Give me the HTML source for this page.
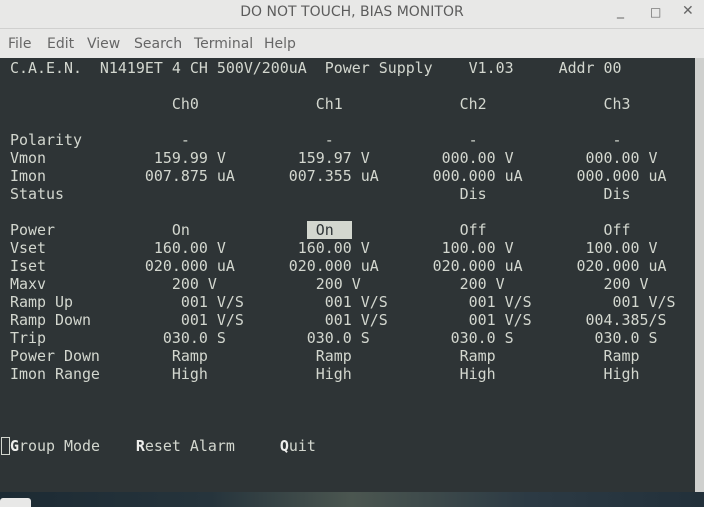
<!DOCTYPE html>
<html><head><meta charset="utf-8"><style>
*{margin:0;padding:0;box-sizing:border-box}
body{width:704px;height:507px;overflow:hidden;background:#2e3436;position:relative;font-family:"Liberation Sans","DejaVu Sans",sans-serif}
#title{position:absolute;left:0;top:0;width:704px;height:29px;background:#e8e8e7;border-bottom:1px solid #d0d0cf}
#title .t{position:absolute;left:0;width:704px;top:4px;text-align:center;font-size:14px;color:#5c5c5c;font-family:"DejaVu Sans",sans-serif}
#title .c{position:absolute;top:3px;font-size:14px;color:#666;font-family:"DejaVu Sans",sans-serif}
#menu{position:absolute;left:0;top:29px;width:704px;height:29px;background:#e8e8e7;font-size:14px;color:#666;font-family:"DejaVu Sans",sans-serif}
#menu span{position:absolute;top:7px}
#term{position:absolute;left:0;top:58px;width:695px;height:434px;background:#2e3436}
pre{position:absolute;left:1px;top:1px;font-family:"DejaVu Sans Mono","Liberation Mono",monospace;font-size:14.95px;line-height:18px;color:#d3d7cf}
.hl{background:#d3d7cf;color:#2e3436}
b{font-weight:bold;color:#eeeeec}
.cur{outline:1px solid #d3d7cf;outline-offset:-1px}
#sb{position:absolute;left:695px;top:58px;width:9px;height:434px;background:#cfd0ce}
#bot{position:absolute;left:0;top:492px;width:704px;height:15px;background:linear-gradient(90deg,#1c2a33 0%,#26343c 30%,#4b5650 50%,#2c3a44 75%,#22303a 100%)}
#bot .w{position:absolute;left:0;top:6px;width:31px;height:9px;background:#e8e8e7;border-radius:3px 3px 0 0}
</style></head><body>
<div id="title"><div class="t">DO NOT TOUCH, BIAS MONITOR</div>
<span class="c" style="left:617px">_</span><span class="c" style="left:650px;font-size:12px;top:5px">□</span><span class="c" style="left:682px">✕</span></div>
<div id="menu"><span style="left:8px">File</span><span style="left:47px">Edit</span><span style="left:87px">View</span><span style="left:134px">Search</span><span style="left:194px">Terminal</span><span style="left:264px">Help</span></div>
<div id="term"><pre> C.A.E.N.  N1419ET 4 CH 500V/200uA  Power Supply    V1.03     Addr 00

                   Ch0             Ch1             Ch2             Ch3

 Polarity           -               -               -               -
 Vmon            159.99 V        159.97 V        000.00 V        000.00 V
 Imon           007.875 uA      007.355 uA      000.000 uA      000.000 uA
 Status                                            Dis             Dis

 Power             On             <span class="hl"> On  </span>            Off             Off
 Vset            160.00 V        160.00 V        100.00 V        100.00 V
 Iset           020.000 uA      020.000 uA      020.000 uA      020.000 uA
 Maxv              200 V           200 V           200 V           200 V
 Ramp Up            001 V/S         001 V/S         001 V/S         001 V/S
 Ramp Down          001 V/S         001 V/S         001 V/S      004.385/S
 Trip             030.0 S         030.0 S         030.0 S         030.0 S
 Power Down        Ramp            Ramp            Ramp            Ramp
 Imon Range        High            High            High            High



<span class="cur"> </span><b>G</b>roup Mode    <b>R</b>eset Alarm     <b>Q</b>uit</pre></div>
<div id="sb"></div>
<div id="bot"><div class="w"></div></div>
</body></html>
